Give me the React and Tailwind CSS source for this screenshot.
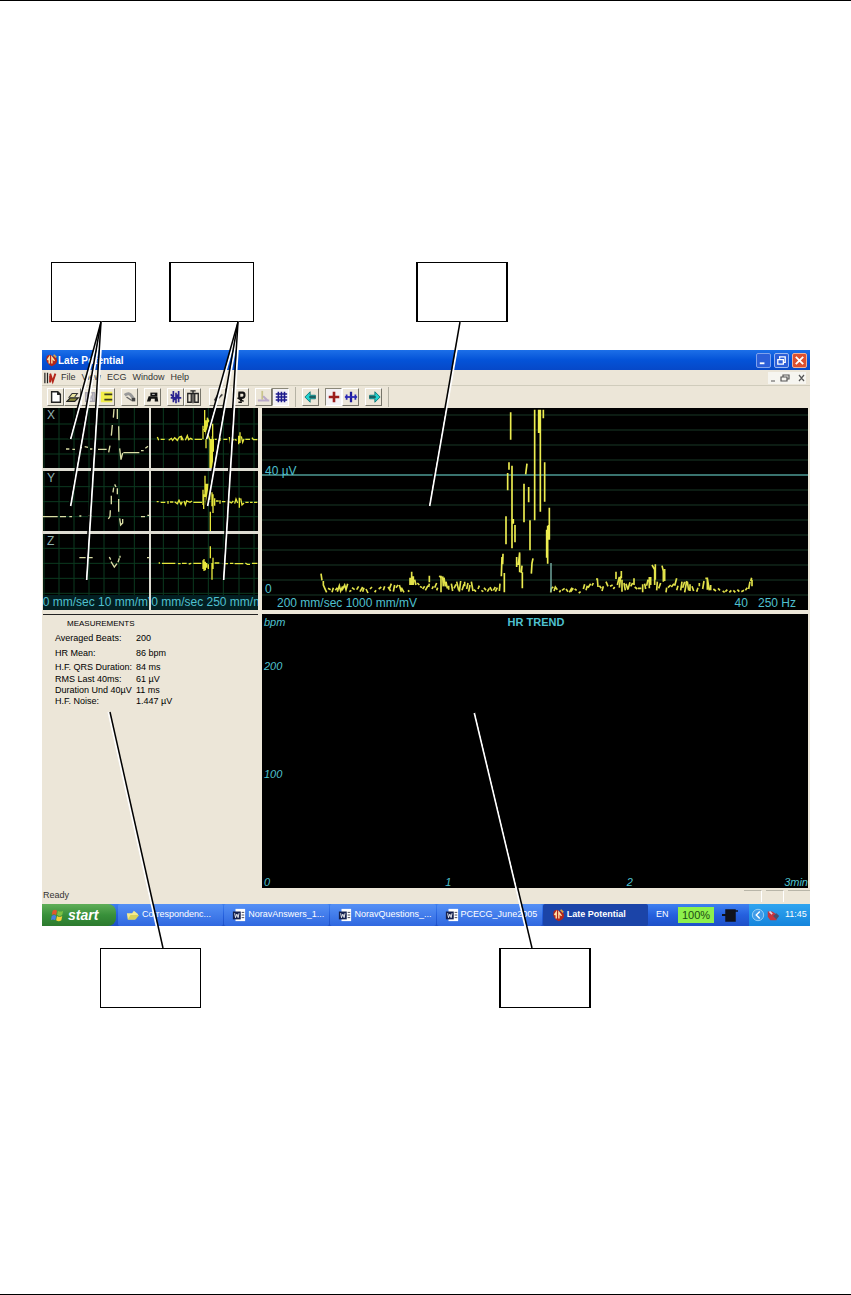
// App.jsx
import React from "react";

const SANS = "font-['Liberation_Sans',Arial,sans-serif]";

const MENUS = ["File", "View", "ECG", "Window", "Help"];

const MEASUREMENTS = [
  { label: "Averaged Beats:", value: "200", height: "h-[15px]" },
  { label: "HR Mean:", value: "86 bpm", height: "h-[15px]" },
  { label: "H.F. QRS Duration:", value: "84 ms", height: "h-[13px]" },
  { label: "RMS Last 40ms:", value: "61 µV", height: "h-[11px]" },
  { label: "Duration Und 40µV", value: "11 ms", height: "h-[11px]" },
  { label: "H.F. Noise:", value: "1.447 µV", height: "h-[11px]" },
];

const TASKS = [
  { label: "Correspondenc...", icon: "folder" },
  { label: "NoravAnswers_1...", icon: "word" },
  { label: "NoravQuestions_...", icon: "word" },
  { label: "PCECG_June2005", icon: "word" },
  { label: "Late Potential", icon: "heart", active: true },
];

// Small drawings, all on a 16x16 canvas
const ICONS = {
  new: <path d="M3 2h7l3 3v9H3zM10 2v3h3" fill="#fff" stroke="#222" strokeWidth="1.6" />,
  open: (
    <>
      <path d="M3 9l4-5h6l-3 4" fill="#e8e4a0" stroke="#333" strokeWidth="1.2" />
      <path d="M1 13l4-4h9l-4 4z" fill="#8a8a3a" stroke="#222" strokeWidth="1.4" />
    </>
  ),
  save: <path d="M3 3h10v10H3zM5 3v4h6V3M6 13v-4h5v4" fill="#d4d0d8" stroke="#a9a5ae" strokeWidth="1.4" />,
  list: (
    <>
      <path d="M1 2h13v12H1z" fill="#f2ee4a" />
      <path d="M5 5h9M5 11h9" stroke="#3a3a20" strokeWidth="1.8" />
    </>
  ),
  print: (
    <>
      <path d="M2 6q5-4 8 1l2 3" fill="none" stroke="#999" strokeWidth="3.4" />
      <path d="M4 8l6 4" fill="none" stroke="#666" strokeWidth="1.6" />
      <path d="M10 9h4v4h-4z" fill="#444" />
    </>
  ),
  phone: (
    <>
      <path d="M5 3h8v4H5z" fill="#111" />
      <path d="M3 7h10l1 6H10V10H6l-1 3H1z" fill="#111" />
      <path d="M7 5h3" stroke="#ddd" />
    </>
  ),
  wave: <path d="M5 1v13M8 3v12M11 1v13M2 5l4 4 5-4M2 9h12M5 12l6-6" fill="none" stroke="#2a2490" strokeWidth="1.9" />,
  book: <path d="M2 4h4v10H2zM10 4h4v10h-4zM6 4h4M8 1v14M5 1h6" fill="none" stroke="#222" strokeWidth="1.5" />,
  pen: <path d="M4 12l3-5 2 2 4-4M4 12h3" fill="none" stroke="#444" strokeWidth="1.8" />,
  help: (
    <>
      <path d="M5 3h5q2 0 2 3t-3 3H6V3M8 9v4" fill="none" stroke="#111" strokeWidth="2.4" />
      <path d="M4 9l7 4M5 14h4" stroke="#111" strokeWidth="1.6" />
    </>
  ),
  peak: (
    <>
      <path d="M6 1v10" stroke="#c9c48a" strokeWidth="2" />
      <path d="M1 12h13M7 7l5 5" stroke="#b9a9c8" strokeWidth="2.4" />
    </>
  ),
  grid: <path d="M5 2v12M8.500 2v12M12 2v12M2 4.500h13M2 8h13M2 11.500h13" stroke="#1d1a8c" strokeWidth="1.8" />,
  left: (
    <>
      <path d="M1 8l6-6v4h6v4H7v4z" fill="#23d3d0" stroke="#0b6f70" />
      <path d="M6 8h7" stroke="#1b2f33" strokeWidth="1.6" />
    </>
  ),
  right: (
    <>
      <path d="M15 8L9 2v4H3v4h6v4z" fill="#23d3d0" stroke="#0b6f70" />
      <path d="M3 8h7" stroke="#1b2f33" strokeWidth="1.6" />
    </>
  ),
  plus: <path d="M8 2v12M2 8h12" stroke="#9c1d1d" strokeWidth="3" />,
  split: (
    <>
      <path d="M8 2v12" stroke="#1d1a9c" strokeWidth="2.6" />
      <path d="M3 5v6M13 5v6" stroke="#2a27b4" strokeWidth="2" />
      <path d="M1 8h14" stroke="#2a27b4" strokeWidth="2" />
    </>
  ),
  heart: (
    <>
      <path d="M3 4q3-4 7 0 4 0 5 4 0 5-6 7-8-3-6-11z" fill="#b3261a" />
      <path d="M4 8l2-3v7M9 12V5l3 4" fill="none" stroke="#ffe3a8" strokeWidth="1.6" />
      <path d="M11 2l3 3" stroke="#e9a13a" strokeWidth="2" />
    </>
  ),
  doc: (
    <>
      <path d="M1 2v12M4 2v12" stroke="#222" strokeWidth="1.4" />
      <path d="M7 3l3 9 3-9M7 13V5" fill="none" stroke="#b3261a" strokeWidth="2.2" />
    </>
  ),
  folder: (
    <>
      <path d="M1 6h6l2-3 5 4-4 6H2z" fill="#f4eb8e" />
      <path d="M2 13l3-5h10l-4 5z" fill="#d8d25a" />
    </>
  ),
  word: (
    <>
      <path d="M4 1h11v14H4z" fill="#fff" />
      <path d="M1 4h9v9H1z" fill="#14204e" />
      <path d="M3 6l1 5 1.500-4L7 11l1-5" fill="none" stroke="#fff" />
      <path d="M11 5h3M11 8h3M11 11h3" stroke="#334" />
    </>
  ),
  flag: (
    <>
      <path d="M3 3q3-2 5 0L7 8Q4 6 2 8z" fill="#e2562c" />
      <path d="M9 3q3 2 6 0l-1 5q-3 2-6 0z" fill="#7cc143" />
      <path d="M2 9q3-2 5 0l-1 5q-3-2-5 0z" fill="#4a7fe0" />
      <path d="M8 9q3 2 6 0l-1 5q-3 2-6 0z" fill="#f5cf3a" />
    </>
  ),
  plug: (
    <>
      <path d="M0 8h6" stroke="#10131c" strokeWidth="2" />
      <path d="M4 3h9v11H4zM13 4h3" fill="#10131c" stroke="#10131c" strokeWidth="1.5" />
    </>
  ),
  chevron: (
    <>
      <circle cx="8" cy="8" r="6.500" fill="#3f9be8" stroke="#9fd4f7" />
      <path d="M10 4L6 8l4 4" fill="none" stroke="#fff" strokeWidth="1.6" />
    </>
  ),
  speaker: (
    <>
      <path d="M2 4h5l5 3v7H5L2 10z" fill="#c8343c" />
      <path d="M8 9l4-3 3 3-3 4z" fill="#4a4f6c" />
      <path d="M4 4l3 3" stroke="#e6d5e6" strokeWidth="2" />
    </>
  ),
};

function Icon({ name, className = "size-3.5" }) {
  return (
    <svg viewBox="0 0 16 16" className={`shrink-0 ${className}`} aria-hidden="true">
      {ICONS[name]}
    </svg>
  );
}

const TOOL_GROUPS = [
  { tools: ["new", "open", "save", "list"] },
  { tools: ["print"] },
  { tools: ["phone"] },
  { tools: ["wave", "book"] },
  { tools: ["pen"], spaced: true },
  { tools: ["help"] },
  { tools: ["peak", "grid"], rule: true },
  { tools: ["left"] },
  { tools: ["plus", "split"] },
  { tools: ["right"], rule: true },
];
const PRESSED = ["grid", "plus"];

function Toolbar() {
  return (
    <div className="flex h-[23px] items-center gap-1.5 overflow-hidden border-t border-[#d0ccbc] bg-[#ece6d8] pl-[5px]">
      {TOOL_GROUPS.map((group) => (
        <React.Fragment key={group.tools[0]}>
          <div className={`flex ${group.spaced ? "ml-0.5" : ""}`}>
            {group.tools.map((tool) => (
              <button
                key={tool}
                type="button"
                aria-label={tool}
                className={`flex h-[18px] w-[17px] items-center justify-center border ${
                  PRESSED.includes(tool)
                    ? "border-t-[#8a8778] border-r-white border-b-white border-l-[#8a8778] bg-[#f3f1f4]"
                    : "border-t-white border-r-[#77756a] border-b-[#77756a] border-l-white"
                }`}
              >
                <Icon name={tool} />
              </button>
            ))}
          </div>
          {group.rule && <div className="h-5 w-px bg-[#b5b2a4]" />}
        </React.Fragment>
      ))}
    </div>
  );
}

// Grid lines of the six small lead plots, three units to a pixel
const GRID_X = "M12 0v620M57 0v620M102 0v620M147 0v620M192 0v620M237 0v620M283 0v620M370 0v620M415 0v620M460 0v620M505 0v620M550 0v620M597 0v620M642 0v620";
const GRID_Y = "M0 57h660M0 102h660M0 147h660M0 245h660M0 290h660M0 335h660M0 430h660M0 475h660M0 520h660M0 565h660";

const LEADS = [
  {
    name: "X",
    height: "h-[60px]",
    left: "9 9 318 180",
    right: "333 9 321 180",
    averaged: "M78 132h10M97 133h8M118 128h8M134 125l10 2M150 132h10M174 133h26M206 142l4-20M214 92l3-32M220 38l2-26M232 12v30M236 64l1 42M239 130l4 34M243 164l5-20M250 143h48M303 137h8M316 130l8-6",
    filtered: "M352 96l4 10M362 103h12M386 106l8-6 4 6 6-8 8 8 6-10 6-2 6 12M424 96v10M436 106l6-14 4 12 6-4 6 4M464 103h22M489 103V62M490 74h8V46M494 15v66M498 130V50M502 76V38l5 14v-6M510 102v88M514 102v92M517 94v96M518 56v70M520 102v38M504 90l6 16M524 103h12M540 98v10M550 103h12M568 96l3 16 4-12 6 6M584 103l6 3M596 92v26M600 82v32M604 94l4 18 4-10M616 103h14M636 98l4 6h12",
  },
  {
    name: "Y",
    height: "h-[60px]",
    left: "9 198 318 180",
    right: "333 198 321 180",
    averaged: "M9 335h44M60 335h18M88 335h8M118 333h6M144 332h10M205 342l5-8 1-18M214 298v-26M219 262l2-14M224 238l4 8M232 250v18M236 282v38M239 340l3 20 6-6v-12M303 335h12M322 331h5",
    filtered: "M350 290h6M362 292h14M384 288v8M390 291h10M404 290l8 6 5-10 6 12 4-8M432 288l4 12 4-12 10 4 6-4M460 292h26M489 300v-46M491 312v-44M495 212v64M499 300v-64M503 236v56M509 242v42M511 320v60M516 262v42M519 268v56M524 280v22M528 288h8M540 286v10M546 290h10M562 286v14M568 290l6 4 6-6M584 296l4-14 5 12M598 278v30M602 280l4 20 6-6M616 292h10M630 292h8M642 292h10",
  },
  {
    name: "Z",
    height: "h-[76px]",
    left: "9 387 318 228",
    right: "333 387 321 228",
    averaged: "M118 458h40M208 456l4 8M213 470l10 16 8-10M234 472l4-12M240 452v6M321 458h6",
    filtered: "M356 474h4M366 475h40M414 476h8M426 475h14M446 477l8-2M460 475h24M489 466v26M492 462v36M496 470v26M500 474v14M505 478v14M511 424v36M516 474v50M519 458v34M524 474h14M546 476h18M570 475h10M584 476h26M616 474l6 4h8M636 475h16",
    captions: ["50 mm/sec 10 mm/mV", "200 mm/sec 250 mm/mV"],
  },
];

function LeadPlot({ box, trace, color, name, caption, height }) {
  return (
    <div className={`relative flex min-w-0 flex-col justify-between overflow-hidden bg-black ${height}`}>
      <svg viewBox={box} preserveAspectRatio="none" className="absolute inset-0 size-full" aria-hidden="true">
        <path d={GRID_X} stroke="#0c3a20" strokeWidth="3" />
        <path d={GRID_Y} stroke="#0c3a20" strokeWidth="3" />
        <path d={trace} fill="none" stroke={color} strokeWidth="4" />
      </svg>
      <span className="relative pl-1 text-xs leading-[14px] text-[#8fb3b3]">{name}</span>
      {caption && (
        <div className="relative flex h-[15px] justify-center bg-[#031f22] text-xs leading-[15px] whitespace-nowrap text-[#4fc0cf]">
          <span className="shrink-0">{caption}</span>
        </div>
      )}
    </div>
  );
}

function Leads() {
  return (
    <div className="grid grid-cols-[106px_107px] gap-x-0.5 gap-y-[3px] bg-[#dedcd2]">
      {LEADS.map((lead) => (
        <React.Fragment key={lead.name}>
          <LeadPlot
            box={lead.left}
            trace={lead.averaged}
            color="#d9dca4"
            name={lead.name}
            caption={lead.captions?.[0]}
            height={lead.height}
          />
          <LeadPlot
            box={lead.right}
            trace={lead.filtered}
            color="#e6e63c"
            caption={lead.captions?.[1]}
            height={lead.height}
          />
        </React.Fragment>
      ))}
    </div>
  );
}

const NOISE =
  "M183 506l3 20M190 528v12l6 14 4 8M204 550l8 4M216 562l4-14M226 556l6-8M232 560l6-18 4 16 6-14M246 556l8-16 4 14 5-18M268 560l6-4M276 548l8 6M290 554l6-10M300 560l8-14M308 560l4-12M318 552l6 12M330 552l6-6M344 562l4-6M356 552l8-6M370 556l4-12M384 546l8 12M388 552l6-16M400 560l4-20M408 548l6-8M418 540l6 20M424 548l8 14M444 556l4 4M450 540v-22M455 500v40M460 514v26M464 524l4 16M472 534l6 6M480 544l6 4M488 552l6-8M496 556l8-14M508 512v20M506 546l2-10M516 552l4-8M524 548l6-14M530 556l3-8M538 512l6 8M543 512v50M548 514l2 30M552 518l4 26M558 530l4 20M566 542v12M574 536l4 22M582 550l6-12M590 530l6 26M598 560l4-32M606 556l6-18M614 530v14M620 552l4-18M626 560l4-20M634 530l5 28M642 554l6 6M654 552l4-10M664 556l6 4M672 548l6 8M682 560l6-10M690 546l6 12M700 556l6-10M706 560l6-12M718 558l2-22";
const COMPLEX =
  "M724 514l2-58M728 478l1-32M733 562v-58M738 418v-84M743 256v-52M747 194v-22M752 104V22M756 430V182M760 356v-14M765 412v-52M770 486v-30M775 480l4-38M779 502v-56M784 504l2-22M787 550v-48M792 352V236M797 208l4-32M806 292v-46M810 436v-90M814 506l2-32 3-14M824 346V14M836 84V14M841 320V14M850 40V14M854 290V172M860 458v-84M863 476V362M868 404v-96M866 400v-40";
const TAIL =
  "M872 562l2-12 6-4M882 558l4-12 6 8M898 562l4-6M906 556l8-6M918 552l6 8M928 562l8-14M932 560l8-10M944 552l6 4M956 564l6-4M970 552l4-14M978 556l4-14M984 548l8-12M996 542l4-8M1008 522h4l2 24M1018 542l6 8M1026 558l4-14M1038 530l6 14M1050 544l8-4M1060 552l4-6M1068 500v22M1072 540l6-24M1078 548l4-34M1084 498v22M1086 560v-36M1092 534l4 22M1098 536l6 18M1104 552l6-20M1112 544l6-10M1122 520v20M1124 546l8 6M1134 550h10M1148 562v-24M1154 536l3 16M1160 542l4-18M1168 550v-34M1172 540v-24M1176 480l8 14v46M1186 478v46M1190 556l2-26M1196 550l6-16M1206 482l4 16v32M1214 492v36M1218 562l2-14M1224 548l8-8M1234 546l8-10M1244 542l6-22M1250 556l4-14M1262 556l4-26M1268 548l6-18M1274 562l6-34M1282 530l4 26M1290 538v20M1296 544l5 14M1310 560l4-12M1318 544v-10M1328 552l4-24M1336 520h6v34M1342 520l6 36M1352 540v16M1360 552l8 6M1374 550l6 6M1388 558l6 4M1396 560l6-6M1408 562l6-6M1420 556l6 6M1432 554l6 6M1444 560l8-4M1456 556l6-8M1466 552l4-22M1472 528l3-10M1476 524v20";

function VectorPlot() {
  return (
    <div className="relative flex min-w-0 flex-col overflow-hidden bg-black text-xs leading-[14px] text-[#4fc0cf]">
      <svg viewBox="6 9 1638 606" preserveAspectRatio="none" className="absolute inset-0 size-full" aria-hidden="true">
        <path
          d="M6 30h1638M6 75h1638M6 120h1638M6 165h1638M6 255h1638M6 300h1638M6 345h1638M6 390h1638M6 435h1638M6 480h1638M6 525h1638M6 570h1638"
          stroke="#10261a"
          strokeWidth="5"
        />
        <path d="M6 210h1638" stroke="#4d9a94" strokeWidth="5" />
        <path d={NOISE} fill="none" stroke="#e2e24a" strokeWidth="5" />
        <path d={COMPLEX} fill="none" stroke="#ecec50" strokeWidth="5" />
        <path d={TAIL} fill="none" stroke="#e2e24a" strokeWidth="5" />
        <path d="M873 562v-88" stroke="#7db8b0" strokeWidth="4" />
      </svg>
      <span className="relative mt-14 pl-[3px]">40 µV</span>
      <span className="relative mt-auto pl-[3px]">0</span>
      <div className="relative flex justify-between pr-3 pl-[15px]">
        <span>200 mm/sec 1000 mm/mV</span>
        <span className="flex gap-2.5">
          <span>40</span>
          <span>250 Hz</span>
        </span>
      </div>
    </div>
  );
}

function Measurements() {
  return (
    <div className="h-[274px] border-t border-[#222] bg-[#ece6d8] pl-3 text-[9px] leading-[11px] text-black">
      <table>
        <caption className="pt-[3px] pb-0.5 pl-3 text-left text-[8px] leading-[11px]">MEASUREMENTS</caption>
        <tbody>
          {MEASUREMENTS.map((row) => (
            <tr key={row.label} className={row.height}>
              <th scope="row" className="w-[81px] max-w-[81px] p-0 text-left font-normal whitespace-nowrap">
                {row.label}
              </th>
              <td className="p-0 whitespace-nowrap">{row.value}</td>
            </tr>
          ))}
        </tbody>
      </table>
    </div>
  );
}

function TrendPlot() {
  return (
    <div className="flex h-[274px] min-w-0 flex-col overflow-hidden bg-black pl-0.5 text-[11px] leading-3 text-[#4fc0cf] italic">
      <div className="grid grid-cols-3 pt-0.5">
        <span>bpm</span>
        <span className="text-center font-bold not-italic">HR TREND</span>
      </div>
      <div className="flex grow flex-col justify-between pt-8">
        <span>200</span>
        <span>100</span>
        <div className="grid grid-cols-3">
          <span>0</span>
          <span>1</span>
          <div className="flex justify-between">
            <span>2</span>
            <span>3min</span>
          </div>
        </div>
      </div>
    </div>
  );
}

function TitleBar() {
  return (
    <div className="flex h-5 items-center bg-linear-to-b from-[#1c6fe8] via-[#0453d8] to-[#0648c8] pr-[3px] pl-0.5 text-white">
      <Icon name="heart" />
      <h1 className="grow text-[10px] font-bold">Late Potential</h1>
      <div className="flex gap-[3px]">
        <button type="button" aria-label="Minimize" className="flex size-[15px] rounded-xs border border-[#7fa2ec] bg-[#2c5fd8]">
          <svg viewBox="0 0 14 14" className="size-full">
            <path d="M3 10h5" stroke="#fff" strokeWidth="2" />
          </svg>
        </button>
        <button type="button" aria-label="Restore" className="flex size-[15px] rounded-xs border border-[#9bb8f0] bg-[#2c5fd8]">
          <svg viewBox="0 0 14 14" className="size-full">
            <path d="M5 5V3h6v6H9M3 6h6v5H3z" fill="none" stroke="#fff" strokeWidth="1.400" />
          </svg>
        </button>
        <button type="button" aria-label="Close" className="flex size-[15px] rounded-xs border border-[#eeb09a] bg-[#dc5030]">
          <svg viewBox="0 0 14 14" className="size-full">
            <path d="M3 3l8 8M11 3l-8 8" stroke="#fff" strokeWidth="2" />
          </svg>
        </button>
      </div>
    </div>
  );
}

function MenuBar() {
  return (
    <div className="flex h-[15px] items-center bg-[#ece6d8] pr-1 pl-0.5 text-[9px] text-[#333]">
      <Icon name="doc" />
      <nav className="flex grow gap-1.5 pl-[3px]">
        {MENUS.map((menu) => (
          <button key={menu} type="button">
            {menu}
          </button>
        ))}
      </nav>
      <svg viewBox="0 0 38 12" className="h-3 w-[38px] bg-[#f6f5f0]" aria-hidden="true">
        <path d="M3 9h4M15 5V3h6v4h-2M13 5h6v4h-6zM31 3l5 6M36 3l-5 6" fill="none" stroke="#555" strokeWidth="1.200" />
      </svg>
    </div>
  );
}

function Taskbar() {
  return (
    <div className="flex h-[22px] bg-linear-to-b from-[#3f80f0] via-[#2560de] to-[#1e50c8] text-[9px] text-white">
      <button
        type="button"
        className="flex w-[74px] items-center gap-1 rounded-r-lg bg-linear-to-b from-[#5fae58] via-[#38903a] to-[#2c7a2e] pl-2 text-sm font-bold italic"
      >
        <Icon name="flag" />
        start
      </button>
      <div className="flex min-w-0 grow gap-px pl-0.5">
        {TASKS.map((task) => (
          <button
            key={task.label}
            type="button"
            className={`flex min-w-0 flex-1 items-center gap-0.5 rounded-xs pl-2 whitespace-nowrap ${
              task.active ? "bg-[#1b44a8] font-bold" : "bg-linear-to-b from-[#5590f5] to-[#3068e0]"
            }`}
          >
            <Icon name={task.icon} />
            {task.label}
          </button>
        ))}
      </div>
      <div className="flex w-[101px] items-center gap-1.5 pl-2">
        <span className="w-4">EN</span>
        <span className="flex h-4 w-9 items-center justify-center bg-[#8df04c] text-[11px] text-[#1c4a14]">100%</span>
        <Icon name="plug" className="h-4 w-5" />
      </div>
      <div className="flex w-[61px] items-center gap-px bg-linear-to-b from-[#2fa4f0] to-[#1585dc] pl-0.5">
        <Icon name="chevron" />
        <Icon name="speaker" />
        <span className="pl-1">11:45</span>
      </div>
    </div>
  );
}

function AppWindow() {
  return (
    <section className="bg-[#ece6d8]">
      <TitleBar />
      <MenuBar />
      <Toolbar />
      <div className="grid grid-cols-[215px_minmax(0,1fr)] gap-1 pr-0.5 pl-px">
        <Leads />
        <VectorPlot />
        <Measurements />
        <TrendPlot />
      </div>
      <div className="flex h-4 items-center justify-between pl-px text-[9px] text-[#333]">
        <span>Ready</span>
        <div className="flex h-3 gap-1">
          <div className="w-[18px] border-t border-r border-t-[#b8b5a8] border-r-white" />
          <div className="w-[18px] border-t border-r border-t-[#b8b5a8] border-r-white" />
          <div className="w-[22px] border-t border-[#b8b5a8]" />
        </div>
      </div>
      <Taskbar />
    </section>
  );
}

const LEADERS = [
  "M101 322L69 439",
  "M101 322L69 506",
  "M101 322L85 580",
  "M238 322L205 439",
  "M238 322L206 506",
  "M238 322L222 580",
  "M460 322L428 506",
  "M163 948L110 712",
  "M532 948L476 713",
];

// Pointers from the callout boxes into the window, black with a white edge
function Leaders() {
  return (
    <svg
      viewBox="42 262 768 746"
      preserveAspectRatio="none"
      className="pointer-events-none absolute inset-0 size-full"
      aria-hidden="true"
    >
      {LEADERS.map((d, i) => (
        <g key={d} fill="none">
          <path d={d} stroke="#fff" strokeWidth="2" transform={i < 7 ? "translate(1.500 0)" : "translate(-1.500 0)"} />
          <path d={d} stroke="#000" strokeWidth="1.500" />
        </g>
      ))}
    </svg>
  );
}

export default function App() {
  return (
    <main className={`flex min-h-screen flex-col border-t border-b border-black bg-white ${SANS}`}>
      <figure className="relative mt-[261px] mr-[41px] mb-auto ml-[42px]">
        <div className="mb-7 flex pl-[9px]">
          <div className="h-[60px] w-[85px] border border-black" />
          <div className="ml-[33px] h-[60px] w-[85px] border border-l-2 border-black" />
          <div className="ml-[162px] h-[60px] w-[92px] border border-x-2 border-black" />
        </div>
        <AppWindow />
        <div className="mt-[22px] flex pl-[58px]">
          <div className="h-[60px] w-[101px] border border-black" />
          <div className="ml-[298px] h-[60px] w-[92px] border border-x-2 border-black" />
        </div>
        <Leaders />
      </figure>
    </main>
  );
}
